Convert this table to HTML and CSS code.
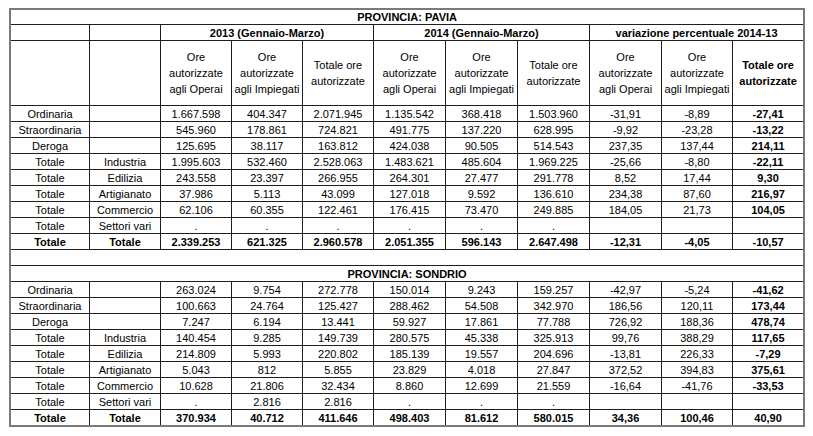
FILE: index.html
```html
<!DOCTYPE html>
<html lang="it">
<head>
<meta charset="utf-8">
<title>Cassa integrazione</title>
<link rel="stylesheet" href="styles.css">
</head>
<body>
<div class="page">
<table class="t">
<colgroup>
<col class="c79"><col class="c71"><col class="c71"><col class="c71"><col class="c71"><col class="c72"><col class="c72"><col class="c72"><col class="c72"><col class="c71"><col class="c70">
</colgroup>
<tbody>
<tr class="h15"><td colspan="11" class="b last">PROVINCIA: PAVIA</td></tr>
<tr class="h16"><td></td><td></td><td colspan="3" class="b">2013 (Gennaio-Marzo)</td><td colspan="3" class="b">2014 (Gennaio-Marzo)</td><td colspan="3" class="b last">variazione percentuale 2014-13</td></tr>
<tr class="hh"><td></td><td></td>
<td class="hd">Ore<br>autorizzate<br>agli Operai</td><td class="hd">Ore<br>autorizzate<br>agli Impiegati</td><td class="hd">Totale ore<br>autorizzate</td>
<td class="hd">Ore<br>autorizzate<br>agli Operai</td><td class="hd">Ore<br>autorizzate<br>agli Impiegati</td><td class="hd">Totale ore<br>autorizzate</td>
<td class="hd">Ore<br>autorizzate<br>agli Operai</td><td class="hd">Ore<br>autorizzate<br>agli Impiegati</td><td class="hd b last">Totale ore<br>autorizzate</td></tr>
<tr><td>Ordinaria</td><td></td><td>1.667.598</td><td>404.347</td><td>2.071.945</td><td>1.135.542</td><td>368.418</td><td>1.503.960</td><td>-31,91</td><td>-8,89</td><td class="b last">-27,41</td></tr>
<tr><td>Straordinaria</td><td></td><td>545.960</td><td>178.861</td><td>724.821</td><td>491.775</td><td>137.220</td><td>628.995</td><td>-9,92</td><td>-23,28</td><td class="b last">-13,22</td></tr>
<tr><td>Deroga</td><td></td><td>125.695</td><td>38.117</td><td>163.812</td><td>424.038</td><td>90.505</td><td>514.543</td><td>237,35</td><td>137,44</td><td class="b last">214,11</td></tr>
<tr><td>Totale</td><td>Industria</td><td>1.995.603</td><td>532.460</td><td>2.528.063</td><td>1.483.621</td><td>485.604</td><td>1.969.225</td><td>-25,66</td><td>-8,80</td><td class="b last">-22,11</td></tr>
<tr><td>Totale</td><td>Edilizia</td><td>243.558</td><td>23.397</td><td>266.955</td><td>264.301</td><td>27.477</td><td>291.778</td><td>8,52</td><td>17,44</td><td class="b last">9,30</td></tr>
<tr><td>Totale</td><td>Artigianato</td><td>37.986</td><td>5.113</td><td>43.099</td><td>127.018</td><td>9.592</td><td>136.610</td><td>234,38</td><td>87,60</td><td class="b last">216,97</td></tr>
<tr><td>Totale</td><td>Commercio</td><td>62.106</td><td>60.355</td><td>122.461</td><td>176.415</td><td>73.470</td><td>249.885</td><td>184,05</td><td>21,73</td><td class="b last">104,05</td></tr>
<tr><td>Totale</td><td>Settori vari</td><td>.</td><td>.</td><td>.</td><td>.</td><td>.</td><td>.</td><td></td><td></td><td class="last"></td></tr>
<tr class="tot"><td>Totale</td><td>Totale</td><td>2.339.253</td><td>621.325</td><td>2.960.578</td><td>2.051.355</td><td>596.143</td><td>2.647.498</td><td>-12,31</td><td>-4,05</td><td class="last">-10,57</td></tr>
<tr><td colspan="11" class="last"></td></tr>
<tr><td colspan="11" class="b last">PROVINCIA: SONDRIO</td></tr>
<tr><td>Ordinaria</td><td></td><td>263.024</td><td>9.754</td><td>272.778</td><td>150.014</td><td>9.243</td><td>159.257</td><td>-42,97</td><td>-5,24</td><td class="b last">-41,62</td></tr>
<tr><td>Straordinaria</td><td></td><td>100.663</td><td>24.764</td><td>125.427</td><td>288.462</td><td>54.508</td><td>342.970</td><td>186,56</td><td>120,11</td><td class="b last">173,44</td></tr>
<tr><td>Deroga</td><td></td><td>7.247</td><td>6.194</td><td>13.441</td><td>59.927</td><td>17.861</td><td>77.788</td><td>726,92</td><td>188,36</td><td class="b last">478,74</td></tr>
<tr><td>Totale</td><td>Industria</td><td>140.454</td><td>9.285</td><td>149.739</td><td>280.575</td><td>45.338</td><td>325.913</td><td>99,76</td><td>388,29</td><td class="b last">117,65</td></tr>
<tr><td>Totale</td><td>Edilizia</td><td>214.809</td><td>5.993</td><td>220.802</td><td>185.139</td><td>19.557</td><td>204.696</td><td>-13,81</td><td>226,33</td><td class="b last">-7,29</td></tr>
<tr><td>Totale</td><td>Artigianato</td><td>5.043</td><td>812</td><td>5.855</td><td>23.829</td><td>4.018</td><td>27.847</td><td>372,52</td><td>394,83</td><td class="b last">375,61</td></tr>
<tr><td>Totale</td><td>Commercio</td><td>10.628</td><td>21.806</td><td>32.434</td><td>8.860</td><td>12.699</td><td>21.559</td><td>-16,64</td><td>-41,76</td><td class="b last">-33,53</td></tr>
<tr><td>Totale</td><td>Settori vari</td><td>.</td><td>2.816</td><td>2.816</td><td>.</td><td>.</td><td>.</td><td></td><td></td><td class="last"></td></tr>
<tr class="tot end"><td>Totale</td><td>Totale</td><td>370.934</td><td>40.712</td><td>411.646</td><td>498.403</td><td>81.612</td><td>580.015</td><td>34,36</td><td>100,46</td><td class="last">40,90</td></tr>
</tbody>
</table>
</div>
</body>
</html>
```

FILE: styles.css
```css
html, body {
  margin: 0;
  padding: 0;
  background: #ffffff;
}

.page {
  padding: 8px 0 0 9px;
}

.t {
  table-layout: fixed;
  width: 796px;
  border-collapse: separate;
  border-spacing: 0;
  border: 2px solid #7a7a7a;
  font-family: "Liberation Sans", Arial, sans-serif;
  font-size: 11px;
  color: #000000;
}

.c79 { width: 79px; }
.c71 { width: 71px; }
.c72 { width: 72px; }
.c70 { width: 70px; }

.t td {
  padding: 0;
  height: 16px;
  line-height: 14px;
  text-align: center;
  vertical-align: middle;
  white-space: nowrap;
  border-right: 1px solid #1e1e1e;
  border-bottom: 1px solid #1e1e1e;
  box-sizing: border-box;
  overflow: hidden;
}

.t tr.h15 td { height: 15px; }

.t tr.hh td {
  height: 65px;
  line-height: 16px;
}

.t td.last { border-right: none; }

.t tr.end td { border-bottom: none; height: 15px; }

.b, .tot td { font-weight: bold; }
```
